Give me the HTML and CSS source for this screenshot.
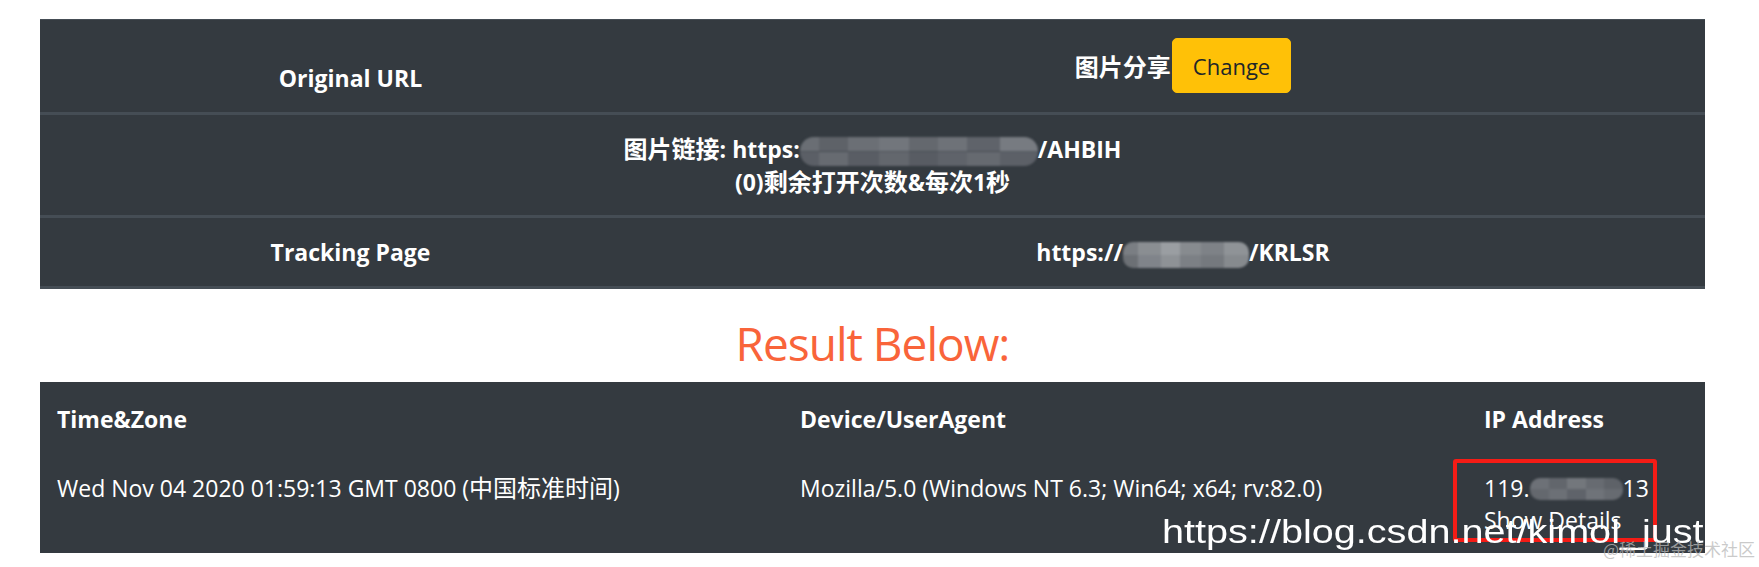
FILE: index.html
```html
<!DOCTYPE html>
<html lang="zh-CN">
<head>
<meta charset="utf-8">
<title>Tracking</title>
<link rel="stylesheet" href="styles.css">
</head>
<body>
<div class="page">
  <table class="info">
    <colgroup><col class="c-label"><col class="c-value"></colgroup>
    <tr class="r-share">
      <th class="label">Original URL</th>
      <th class="value"><div class="share"><span class="cjk">图片分享</span><button class="btn">Change</button></div></th>
    </tr>
    <tr class="r-link">
      <th colspan="2" class="link"><span class="cjk">图片链接</span>: https:<span class="blur b1"></span>/AHBIH<br>(0)<span class="cjk">剩余打开次数</span>&amp;<span class="cjk">每次</span>1<span class="cjk">秒</span></th>
    </tr>
    <tr class="r-track">
      <th class="label">Tracking Page</th>
      <th class="value">https://<span class="blur b2"></span>/KRLSR</th>
    </tr>
  </table>

  <h2 class="result-title">Result Below:</h2>

  <table class="result">
    <colgroup><col class="c-time"><col class="c-device"><col class="c-ip"></colgroup>
    <thead>
      <tr><th>Time&amp;Zone</th><th>Device/UserAgent</th><th>IP Address</th></tr>
    </thead>
    <tbody>
      <tr>
        <td>Wed Nov 04 2020 01:59:13 GMT 0800 (<span class="cjk">中国标准时间</span>)</td>
        <td>Mozilla/5.0 (Windows NT 6.3; Win64; x64; rv:82.0)</td>
        <td>119.<span class="blur b3"></span>13<br><a class="details">Show Details</a></td>
      </tr>
    </tbody>
  </table>

  <div class="mark-box"></div>
  <div class="mark-url">https://blog.csdn.net/kimol_just</div>
  <div class="mark-juejin">@稀土掘金技术社区</div>
</div>
</body>
</html>
```

FILE: styles.css
```css
html, body {
  margin: 0;
  padding: 0;
  background: #ffffff;
}

body {
  font-family: "Open Sans", "Noto Sans CJK SC", sans-serif;
  font-size: 23px;
  color: #ffffff;
}

.cjk {
  font-family: "Noto Sans CJK SC", sans-serif;
  font-size: 24px;
  line-height: 16px;
}

.page {
  position: relative;
  width: 1759px;
  height: 567px;
  padding: 19px 0 0 40px;
  box-sizing: border-box;
  overflow: hidden;
}

/* ---------- top info table ---------- */
.info {
  width: 1665px;
  table-layout: fixed;
  border-collapse: separate;
  border-spacing: 0;
  background: #343a40;
}

.c-label { width: 621px; }
.c-value { width: 1044px; }

.info th {
  font-weight: 700;
  text-align: center;
  line-height: 34px;
  padding: 17px;
  border-top: 1px solid #454d55;
}

.r-share .label {
  vertical-align: bottom;
  padding-bottom: 17px;
}

.r-share .value {
  padding: 18px 17px 19px;
}

.share {
  display: flex;
  justify-content: center;
  align-items: center;
  gap: 1px;
  height: 55px;
}

.btn {
  height: 55px;
  padding: 0 20px;
  border: 1px solid #ffc107;
  border-radius: 5px;
  background: #ffc107;
  color: #212529;
  font-family: "Open Sans", "Noto Sans CJK SC", sans-serif;
  font-size: 22px;
  font-weight: 400;
  line-height: 1;
}

.info .r-link .link {
  border-top: 3px solid #454d55;
  line-height: 33px;
  padding: 18px 17px 16px;
}

.info .r-track th {
  border-top: 3px solid #454d55;
  border-bottom: 3px solid #454d55;
  padding: 17px;
}

/* pixelated blur blocks */
.blur {
  display: inline-block;
  border-radius: 14px;
  filter: blur(0.8px);
  background-repeat: no-repeat;
  background-size: 100% 50%, 100% 50%;
  background-position: left top, left bottom;
}

.b1 {
  width: 238px;
  height: 29px;
  vertical-align: -8px;
  background-image:
    linear-gradient(90deg,
      #6a6e74 0 8%, #5e6268 8% 20%, #6b6f75 20% 33%, #72767c 33% 46%,
      #64686e 46% 58%, #6e7278 58% 70%, #5f636a 70% 84%, #777b81 84% 100%),
    linear-gradient(90deg,
      #5b5f66 0 8%, #676b71 8% 20%, #595d64 20% 33%, #63676d 33% 46%,
      #585c63 46% 58%, #5f636a 58% 70%, #666a70 70% 84%, #5c6067 84% 100%);
}

.b2 {
  width: 126px;
  height: 26px;
  vertical-align: -7px;
  border-radius: 10px;
  background-image:
    linear-gradient(90deg,
      #7a7e83 0 12%, #8a8e92 12% 30%, #9a9ea2 30% 45%, #878b8f 45% 62%,
      #7e8287 62% 80%, #8f9397 80% 100%),
    linear-gradient(90deg,
      #6c7075 0 12%, #80848a 12% 30%, #8e9296 30% 45%, #7c8085 45% 62%,
      #75797e 62% 80%, #868a8e 80% 100%);
}

.b3 {
  width: 93px;
  height: 22px;
  vertical-align: -3px;
  border-radius: 10px;
  background-image:
    linear-gradient(90deg,
      #6d7177 0 20%, #62666c 20% 40%, #73777c 40% 60%, #676b71 60% 80%, #5e6268 80% 100%),
    linear-gradient(90deg,
      #64686e 0 20%, #6c7076 20% 40%, #5f636a 40% 60%, #6f7379 60% 80%, #676b71 80% 100%);
}

/* ---------- heading ---------- */
.result-title {
  width: 1665px;
  margin: 31px 0 16px;
  font-size: 46px;
  line-height: 46px;
  font-weight: 400;
  letter-spacing: -1px;
  text-align: center;
  color: #f9643a;
}

/* ---------- result table ---------- */
.result {
  width: 1665px;
  table-layout: fixed;
  border-collapse: separate;
  border-spacing: 0;
  background: #343a40;
}

.c-time { width: 743px; }
.c-device { width: 684px; }
.c-ip { width: 238px; }

.result th {
  font-weight: 700;
  text-align: left;
  line-height: 34px;
  padding: 20px 17px 19px;
  vertical-align: bottom;
}

.result td {
  text-align: left;
  line-height: 32px;
  padding: 17px;
  vertical-align: top;
  white-space: nowrap;
}

.details {
  color: #ffffff;
}

/* ---------- overlays (annotations on the screenshot) ---------- */
.mark-box {
  position: absolute;
  left: 1453px;
  top: 459px;
  width: 204px;
  height: 83px;
  box-sizing: border-box;
  border: 4px solid #f51c16;
  border-radius: 3px;
}

.mark-url {
  position: absolute;
  left: 1162px;
  top: 514px;
  font-family: "Liberation Sans", Arial, sans-serif;
  font-size: 34px;
  line-height: 34px;
  color: #ffffff;
  white-space: nowrap;
  transform: scaleX(1.165);
  transform-origin: left top;
}

.mark-juejin {
  position: absolute;
  left: 1603px;
  top: 539px;
  font-family: "Noto Sans CJK SC", sans-serif;
  font-size: 17px;
  line-height: 20px;
  color: rgba(185, 185, 185, 0.75);
  white-space: nowrap;
}
```
